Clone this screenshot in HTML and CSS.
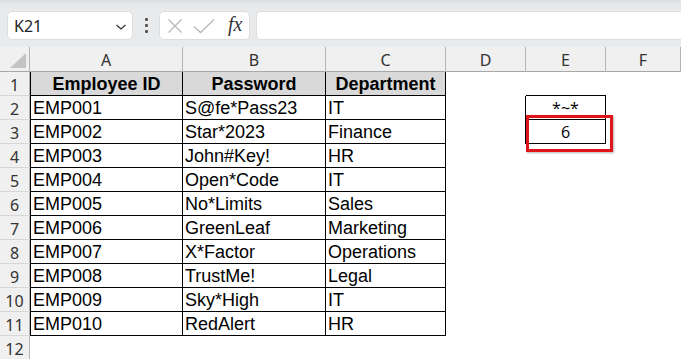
FILE: index.html
```html
<!DOCTYPE html>
<html lang="en">

<head>
    <meta charset="UTF-8">
    <meta name="viewport" content="width=device-width, initial-scale=1.0">
    <title>Wildcard Count</title>
    <link rel="stylesheet" href="styles.css">
</head>

<body>
    <div class="toolbar">
        <div class="name-box">
            <span>K21</span>
            <svg class="chevron" width="12" height="8" viewBox="0 0 12 8">
                <path d="M1.5 2 L6 6 L10.5 2" fill="none" stroke="#333" stroke-width="1.3" />
            </svg>
        </div>
        <div class="grip">
            <span></span><span></span><span></span>
        </div>
        <div class="fx-box">
            <svg width="16" height="16" viewBox="0 0 16 16">
                <path d="M1.5 1.5 L14.5 14.5 M14.5 1.5 L1.5 14.5" stroke="#b9b9b9" stroke-width="1.3" />
            </svg>
            <svg width="22" height="16" viewBox="0 0 22 16">
                <path d="M1 8.5 L7.5 14.5 L21 1.5" fill="none" stroke="#b9b9b9" stroke-width="1.3" />
            </svg>
            <span class="fx">fx</span>
        </div>
        <div class="formula-box"></div>
    </div>

    <div class="sheet head">
        <div class="corner"><span class="tri"></span></div>
        <div class="col-head">A</div>
        <div class="col-head">B</div>
        <div class="col-head">C</div>
        <div class="col-head">D</div>
        <div class="col-head">E</div>
        <div class="col-head">F</div>
    </div>

    <div class="sheet" id="rows"></div>

    <script>
        const data = [
            ['EMP001', 'S@fe*Pass23', 'IT'],
            ['EMP002', 'Star*2023', 'Finance'],
            ['EMP003', 'John#Key!', 'HR'],
            ['EMP004', 'Open*Code', 'IT'],
            ['EMP005', 'No*Limits', 'Sales'],
            ['EMP006', 'GreenLeaf', 'Marketing'],
            ['EMP007', 'X*Factor', 'Operations'],
            ['EMP008', 'TrustMe!', 'Legal'],
            ['EMP009', 'Sky*High', 'IT'],
            ['EMP010', 'RedAlert', 'HR']
        ];

        function cell(text, cls) {
            const div = document.createElement('div');
            div.className = 'cell ' + cls;
            div.textContent = text;
            return div;
        }

        function buildRows() {
            const rows = document.getElementById('rows');

            // row 1: headers
            rows.appendChild(cell('1', 'row-head'));
            ['Employee ID', 'Password', 'Department'].forEach((h, i) => {
                rows.appendChild(cell(h, 'title' + (i === 0 ? ' first' : '')));
            });
            rows.appendChild(cell('', 'blank'));
            rows.appendChild(cell('', 'blank e-top'));
            rows.appendChild(cell('', 'blank'));

            data.forEach((r, idx) => {
                const n = idx + 2;
                rows.appendChild(cell(String(n), 'row-head'));
                rows.appendChild(cell(r[0], 'data first'));
                rows.appendChild(cell(r[1], 'data'));
                rows.appendChild(cell(r[2], 'data'));

                if (n === 2) {
                    rows.appendChild(cell('', 'blank d-edge'));
                    rows.appendChild(cell('*~*', 'calc'));
                } else if (n === 3) {
                    rows.appendChild(cell('', 'blank d-edge'));
                    rows.appendChild(cell('6', 'calc result'));
                } else {
                    rows.appendChild(cell('', 'blank'));
                    rows.appendChild(cell('', 'blank'));
                }
                rows.appendChild(cell('', 'blank'));
            });

            rows.appendChild(cell('12', 'row-head'));
            for (let i = 0; i < 6; i++) {
                rows.appendChild(cell('', 'blank'));
            }
        }

        buildRows();
    </script>
</body>

</html>
```

FILE: styles.css
```css
* {
    margin: 0;
    padding: 0;
    box-sizing: border-box;
}

body {
    background-color: #fff;
    font-family: "Liberation Sans", Arial, sans-serif;
    width: 681px;
    height: 359px;
    overflow: hidden;
}

.toolbar {
    height: 47px;
    background: linear-gradient(#dcdddf 0, #e6e7e8 4px, #e9eaeb 10px);
    display: flex;
    align-items: flex-start;
    padding: 11px 0 0 7px;
}

.name-box {
    width: 126px;
    height: 29px;
    background-color: #fff;
    border: 1px solid #dedede;
    border-radius: 5px;
    display: flex;
    align-items: center;
    justify-content: space-between;
    padding: 0 5px 0 6px;
    font-family: "Noto Sans", sans-serif;
    font-size: 16px;
    color: #222;
}

.chevron {
    margin-top: 2px;
}

.grip {
    width: 26px;
    height: 29px;
    display: flex;
    flex-direction: column;
    align-items: center;
    justify-content: center;
    gap: 3px;
}

.grip span {
    width: 3px;
    height: 3px;
    background-color: #555;
    border-radius: 1px;
}

.fx-box {
    width: 91px;
    height: 29px;
    background-color: #fff;
    border: 1px solid #dedede;
    border-radius: 5px;
    display: flex;
    align-items: center;
    padding-left: 7px;
    gap: 10px;
}

.fx {
    font-family: "Liberation Serif", serif;
    font-style: italic;
    font-size: 20px;
    color: #333;
    margin-left: 3px;
    margin-top: -3px;
}

.formula-box {
    flex-grow: 1;
    height: 29px;
    margin-left: 6px;
    background-color: #fff;
    border: 1px solid #dedede;
    border-right: none;
    border-radius: 5px 0 0 5px;
}

.sheet {
    display: grid;
    grid-template-columns: 30px 153px 143px 120px 80px 80px 1fr;
    grid-auto-rows: 24px;
}

.sheet.head {
    grid-auto-rows: 25px;
}

.corner {
    background-color: #f0f0f0;
    border-right: 1px solid #b5b5b5;
    border-bottom: 1px solid #a8a8a8;
    position: relative;
}

.tri {
    position: absolute;
    left: 10px;
    top: 6px;
    width: 0;
    height: 0;
    border-left: 16px solid transparent;
    border-bottom: 15px solid #c3c3c3;
}

.col-head {
    background-color: #f0f0f0;
    border-right: 1px solid #b5b5b5;
    border-bottom: 1px solid #a8a8a8;
    font-family: "Noto Sans", sans-serif;
    font-size: 16px;
    color: #333;
    display: flex;
    align-items: center;
    justify-content: center;
    padding-top: 2px;
}

.cell {
    display: flex;
    align-items: flex-end;
    font-size: 18px;
    line-height: 18px;
    padding-bottom: 2px;
    color: #000;
    white-space: nowrap;
    overflow: visible;
}

.row-head {
    background-color: #f0f0f0;
    border-right: 1px solid #b5b5b5;
    border-bottom: 1px solid #d6d6d6;
    font-family: "Noto Sans", sans-serif;
    font-size: 16px;
    color: #333;
    justify-content: center;
    padding-bottom: 1px;
}

.title {
    background-color: #d9d9d9;
    font-weight: bold;
    justify-content: center;
    border-right: 1px solid #000;
    border-bottom: 1px solid #000;
}

.data {
    padding-left: 2px;
    border-right: 1px solid #000;
    border-bottom: 1px solid #000;
}

.first {
    border-left: 1px solid #000;
}

.e-top {
    border-bottom: 1px solid #000;
}

.d-edge {
    border-right: 1px solid #000;
}

.calc {
    font-family: "Open Sans", sans-serif;
    font-size: 16px;
    justify-content: center;
    border-right: 1px solid #000;
    border-bottom: 1px solid #000;
    position: relative;
}

.result::after {
    content: '';
    position: absolute;
    left: 0;
    top: -5px;
    width: 81px;
    height: 31px;
    border: 3px solid #e0141b;
    box-shadow: 1px 1px 2px rgba(0, 0, 0, 0.3);
}
```
